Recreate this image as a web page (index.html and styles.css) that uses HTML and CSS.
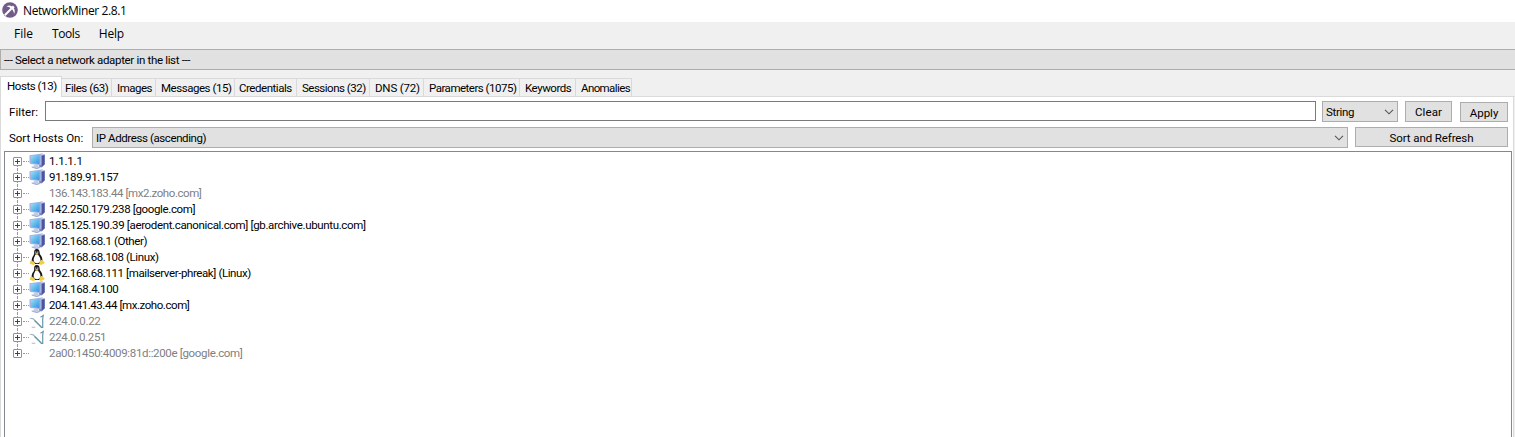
FILE: index.html
```
<!DOCTYPE html>
<html lang="en">
<head>
<meta charset="utf-8">
<title>NetworkMiner 2.8.1</title>
<link rel="stylesheet" href="styles.css">
</head>
<body>
<svg class="defs" aria-hidden="true">
  <defs>
    <linearGradient id="glass" x1="0" y1="0" x2="1" y2="1"><stop offset="0" stop-color="#a5e0fa"/><stop offset=".5" stop-color="#62bbee"/><stop offset="1" stop-color="#3a8ddb"/></linearGradient>
    <symbol id="pc" viewBox="0 0 16 16">
      <path d="M10 1.500l2.500-1L15.800 1.600v10L12.500 14.500 10 13.500z" fill="#7480bd"/>
      <path d="M10 1.500l2.500-1L15.800 1.600l-2.900 1z" fill="#c5cdea"/>
      <path d="M13 3l2.500-1v9.300L13 13.600z" fill="#4b559f"/>
      <path d="M.5 2.200L11.300.8l1 .9v9.600l-1 1L1.700 11l-1.200-1z" fill="#a3b3e0"/>
      <path d="M1.600 3l8.900-1.100v9L2.600 9.900z" fill="url(#glass)"/>
      <path d="M5 11.500l4.200.5.4 1.500 2 .9-3.800 1.500-5.400-1.900 2.600-1z" fill="#c3cbe6"/>
      <path d="M2.800 14.100l4.900 1.500 3.600-1.200" fill="none" stroke="#8f9ac4" stroke-width=".7"/>
    </symbol>
    <symbol id="tux" viewBox="0 0 16 16">
      <path d="M7.800 0C5.800 0 5 1.500 5.200 3.400c.1 1.800-.4 2.700-1.400 4.200-1 1.700-1.400 3.400-1 5.200L6 15h4.500l2.900-2.500c.3-2.400-.5-4.600-1.700-6.200-.9-1.200-1-2-1.100-3.300C10.400 1 9.500 0 7.800 0z" fill="#161616"/>
      <path d="M6.400 5.400h2.700c.5 1.500 2.400 3 2.400 5.400 0 2-1.500 3.500-3.400 3.500s-3.500-1.500-3.500-3.500c0-2.200 1.500-3.600 1.800-5.400z" fill="#fff"/>
      <path d="M6.300 2.500h1v1.200h-1zm2 0h1v1.200h-1z" fill="#fff"/>
      <path d="M6 4.100h3.600L7.900 6z" fill="#e8b923"/>
      <path d="M2.200 11.200l3.200 1.800.9 2.200-2 .8L.8 14.800l.3-2.300zM12.600 10.700l1.400 1.400 1.800 1.200-.9 1.400-3.200 1.300-1.500-.9.400-2.900z" fill="#f3d040"/>
    </symbol>
    <symbol id="cast" viewBox="0 0 16 16">
      <path d="M.8 5.200l2.700.4 3.300 2.700M4 5.500L12 13.800M2.800 14.300h3.500M7.500 8.500l1 2" fill="none" stroke="#a5bcc6" stroke-width="1.100"/>
      <path d="M5.500 7.500l7.300 7M11.500 4.200l2.700-1.700-.5 4v7.800h-2" fill="none" stroke="#6698ae" stroke-width="1.200"/>
    </symbol>
    <symbol id="chevron" viewBox="0 0 10 6"><path d="M1 .8l4 4 4-4" fill="none" stroke="#555" stroke-width="1.100"/></symbol>
  </defs>
</svg>

<header class="titlebar">
  <svg class="logo" viewBox="0 0 16 16"><circle cx="8" cy="8" r="7.800" fill="#725a8b"/><path d="M2.800 13.200L9.500 6.500" fill="none" stroke="#fff" stroke-width="2"/><path d="M4.400 4.200c2.400-1 4.300-.8 5.500.2l1-.8 1.700 1.700-.8 1c1.200 1.400 1.300 3.300.3 5.600-.2-2-1.100-3.500-2.400-4.800S6.600 4.500 4.400 4.200z" fill="#fff"/></svg>
  <h1 class="k40">NetworkMiner 2.8.1</h1>
</header>
<nav class="menu"><span>File</span><span class="k40">Tools</span><span class="k20">Help</span></nav>
<div class="adapter k33">--- Select a network adapter in the list ---</div>

<div class="tabs">
  <div class="tab active k44">Hosts (13)</div>
  <div class="tab files k44">Files (63)</div>
  <div class="tab images k50">Images</div>
  <div class="tab messages k46">Messages (15)</div>
  <div class="tab credentials k46">Credentials</div>
  <div class="tab sessions k50">Sessions (32)</div>
  <div class="tab dns k20">DNS (72)</div>
  <div class="tab parameters k50">Parameters (1075)</div>
  <div class="tab keywords k46">Keywords</div>
  <div class="tab anomalies k60">Anomalies</div>
</div>

<main class="page">
  <div class="filter-row">
    <label class="k-10">Filter:</label>
    <div class="input"></div>
    <div class="combo mode"><span class="k35">String</span><svg class="chev"><use href="#chevron"/></svg></div>
    <div class="button clear k-10">Clear</div>
    <div class="button apply">Apply</div>
  </div>
  <div class="sort-row">
    <label class="k06">Sort Hosts On:</label>
    <div class="combo order"><span class="k40">IP Address (ascending)</span><svg class="chev"><use href="#chevron"/></svg></div>
    <div class="button refresh k10">Sort and Refresh</div>
  </div>
  <div class="tree">
    <div class="node"><i class="plus"></i><svg class="icon"><use href="#pc"/></svg><span class="k20">1.1.1.1</span></div>
    <div class="node"><i class="plus"></i><svg class="icon"><use href="#pc"/></svg><span class="k33">91.189.91.157</span></div>
    <div class="node dim"><i class="plus"></i><svg class="icon"></svg><span class="k44">136.143.183.44 [mx2.zoho.com]</span></div>
    <div class="node"><i class="plus"></i><svg class="icon"><use href="#pc"/></svg><span class="k36">142.250.179.238 [google.com]</span></div>
    <div class="node"><i class="plus"></i><svg class="icon"><use href="#pc"/></svg><span class="k35">185.125.190.39 [aerodent.canonical.com] [gb.archive.ubuntu.com]</span></div>
    <div class="node"><i class="plus"></i><svg class="icon"><use href="#pc"/></svg><span class="k40">192.168.68.1 (Other)</span></div>
    <div class="node"><i class="plus"></i><svg class="icon"><use href="#tux"/></svg><span class="k40">192.168.68.108 (Linux)</span></div>
    <div class="node"><i class="plus"></i><svg class="icon"><use href="#tux"/></svg><span class="k40">192.168.68.111 [mailserver-phreak] (Linux)</span></div>
    <div class="node"><i class="plus"></i><svg class="icon"><use href="#pc"/></svg><span class="k33">194.168.4.100</span></div>
    <div class="node"><i class="plus"></i><svg class="icon"><use href="#pc"/></svg><span class="k44">204.141.43.44 [mx.zoho.com]</span></div>
    <div class="node dim"><i class="plus"></i><svg class="icon"><use href="#cast"/></svg><span class="k30">224.0.0.22</span></div>
    <div class="node dim"><i class="plus"></i><svg class="icon"><use href="#cast"/></svg><span class="k33">224.0.0.251</span></div>
    <div class="node dim"><i class="plus"></i><svg class="icon"></svg><span class="k33">2a00:1450:4009:81d::200e [google.com]</span></div>
  </div>
</main>
</body>
</html>
```
FILE: styles.css
```
* { box-sizing: border-box; }
body {
  margin: 0;
  height: 437px;
  overflow: hidden;
  display: flex;
  flex-direction: column;
  background: #f0f0f0;
  color: #000;
  font: 11.5px/16px Roboto, "Liberation Sans", sans-serif;
  white-space: nowrap;
}
.defs { position: absolute; width: 0; height: 0; }

/* Letter spacing steps, in hundredths of a pixel */
.k-10 { letter-spacing: .1px; }
.k06 { letter-spacing: -.02px; }
.k10 { letter-spacing: -.1px; }
.k20 { letter-spacing: -.18px; }
.k30 { letter-spacing: -.28px; }
.k33 { letter-spacing: -.33px; }
.k35 { letter-spacing: -.35px; }
.k36 { letter-spacing: -.36px; }
.k40 { letter-spacing: -.4px; }
.k44 { letter-spacing: -.44px; }
.k46 { letter-spacing: -.46px; }
.k50 { letter-spacing: -.5px; }
.k60 { letter-spacing: -.6px; }

.titlebar {
  height: 22px;
  flex: none;
  display: flex;
  align-items: center;
  padding-left: 2px;
  gap: 5px;
  background: #fff;
}
.logo { width: 16px; height: 16px; margin-top: -2px; }
.titlebar h1 { margin: 0; font: 12px/22px "Open Sans", sans-serif; }
.menu {
  height: 27px;
  flex: none;
  display: flex;
  gap: 19px;
  padding-left: 14px;
  font: 12px/24px "Open Sans", sans-serif;
}
.adapter {
  height: 21px;
  flex: none;
  padding-left: 3px;
  border: 1px solid #adadad;
  border-right: 0;
  background: #e1e1e1;
  line-height: 20px;
}

.tabs {
  height: 27px;
  flex: none;
  display: flex;
  align-items: flex-end;
  box-shadow: inset 0 -1px #dadada;
}
.tab {
  height: 19px;
  padding-left: 3px;
  border: solid #d9d9d9;
  border-width: 1px 1px 1px 0;
  line-height: 19px;
}
.tab.active {
  width: 62px;
  height: 21px;
  padding-left: 6px;
  border-left-width: 1px;
  border-bottom: 0;
  background: #fff;
}
.files { width: 50px; }
.images { width: 44px; padding-left: 5px; }
.messages { width: 79px; padding-left: 5px; }
.credentials { width: 62px; padding-left: 4px; }
.sessions { width: 73px; padding-left: 5px; }
.dns { width: 54px; padding-left: 5px; }
.parameters { width: 96px; padding-left: 5px; }
.keywords { width: 56px; padding-left: 5px; }
.anomalies { width: 56px; padding-left: 5px; }

.page {
  flex: 1;
  display: flex;
  flex-direction: column;
  margin-right: 1px;
  padding: 4px 1px 0 3px;
  background: #fff;
  border: solid #dadada;
  border-width: 0 1px 0 1px;
}
.filter-row, .sort-row { display: flex; flex: none; height: 21px; }
.filter-row label, .sort-row label { padding-left: 5px; line-height: 22px; }
.filter-row label { width: 41px; }
.input { width: 1271px; height: 20px; border: 1px solid #7a7a7a; }
.combo {
  display: flex;
  align-items: center;
  justify-content: space-between;
  border: 1px solid #adadad;
  background: #e1e1e1;
  height: 21px;
  padding: 1px 3px 0;
}
.chev { width: 10px; height: 6px; }
.mode { width: 76px; margin-left: 6px; }
.button {
  border: 1px solid #adadad;
  background: #e1e1e1;
  height: 21px;
  line-height: 20px;
  text-align: center;
}
.clear { width: 47px; margin-left: 7px; }
.apply { width: 48px; margin: 1px 0 0 8px; height: 20px; }
.sort-row { margin-top: 5px; }
.sort-row label { width: 88px; }
.order { width: 1256px; }
.refresh { width: 153px; margin-left: 7px; height: 20px; }

.tree {
  flex: 1;
  width: 1508px;
  margin-top: 3px;
  padding: 1px 0 0 7px;
  border: 1px solid #828790;
  border-bottom: 0;
}
.node { position: relative; display: flex; align-items: center; height: 16px; }
.node::before {
  content: "";
  position: absolute;
  left: 5px;
  top: 0;
  bottom: 0;
  border-left: 1px dotted #999;
}
.node:first-child::before { top: 8px; }
.node:last-child::before { bottom: 8px; }
.plus {
  position: relative;
  width: 9px;
  height: 9px;
  margin: 1px 7px 0 1px;
  border: 1px solid #919191;
  border-radius: 1px;
  background:
    linear-gradient(#2c3f98, #2c3f98) center / 5px 1px no-repeat,
    linear-gradient(#2c3f98, #2c3f98) center / 1px 5px no-repeat,
    #fff;
}
.plus::after {
  content: "";
  position: absolute;
  left: 9px;
  top: 3px;
  width: 6px;
  border-top: 1px dotted #999;
}
.icon { width: 16px; height: 16px; margin-right: 4px; }
.dim { color: #808080; }
```
